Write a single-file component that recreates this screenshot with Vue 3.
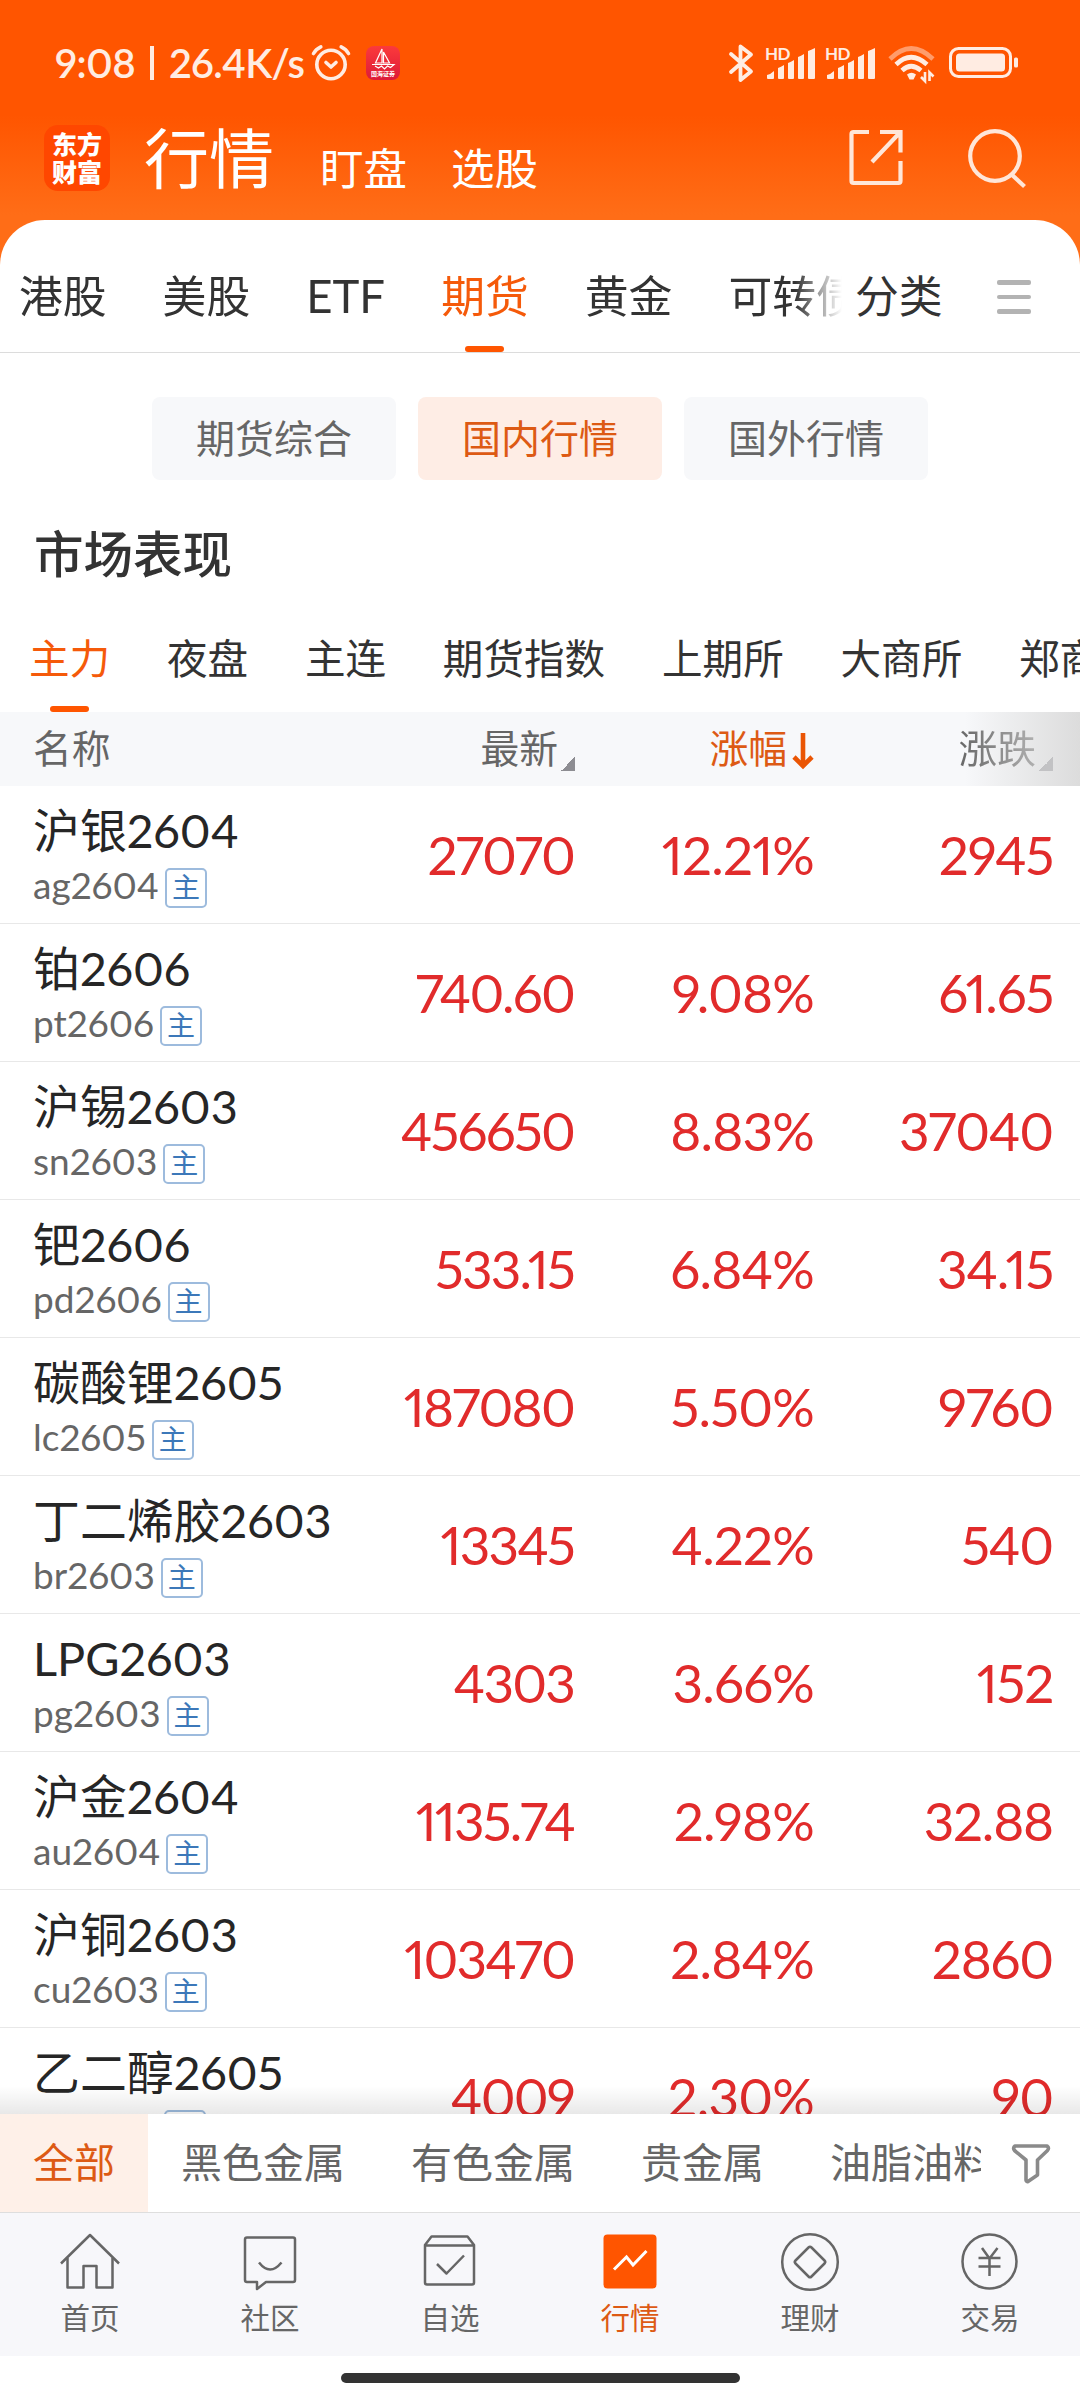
<template>
  <div class="phone">
    <header class="top">
      <!-- Status bar -->
      <div class="status">
        <span class="clock">9:08</span>
        <i class="clock-sep"></i>
        <span class="speed">26.4K/s</span>
        <svg class="alarm" width="40" height="38" viewBox="0 0 40 38" fill="none" stroke="#ffece2" stroke-width="3.6" stroke-linecap="round" stroke-linejoin="round">
          <circle cx="20" cy="20.5" r="14.2" />
          <path d="M15 18.500l5 4.500 5-4.500" />
          <path d="M2.500 9.500Q5 5 9.800 2.800M37.500 9.500Q35 5 30.200 2.800" />
        </svg>
        <div class="mini-app">
          <svg width="24" height="22" viewBox="0 0 24 22" fill="none" stroke="#fff" stroke-width="1.200">
            <path d="M11 1L4.500 15H11zM12.500 4l6 11h-6zM1 16.500h22l-3.500 3-3-1.500-3 3-3-3-3 2-3.500-2" />
          </svg>
          <span>国海证券</span>
        </div>
        <div class="status-right">
          <svg width="24" height="38" viewBox="0 0 24 38" fill="none" stroke="#ffece2" stroke-width="3.8" stroke-linejoin="round" stroke-linecap="round">
            <path d="M2 10l20 17.500-10.500 8.500V2.500L22 10.500 2 28" />
          </svg>
          <svg v-for="n in 2" :key="n" class="signal" width="50" height="34" viewBox="0 0 50 34" fill="#ffece2">
            <text x="-1" y="13.500" font-size="17" font-weight="700" letter-spacing="-0.6">HD</text>
            <path d="M1 32v-3q4-1 7-4v7q0 1-1 1H2q-1 0-1-1zM12 32V22q3-1 6-3v13q0 1-1 1h-4q-1 0-1-1zM22 32V17q3-1 6-3v18q0 1-1 1h-4q-1 0-1-1zM32 32V11q3-1 6-3v24q0 1-1 1h-4q-1 0-1-1zM42 32V5q3-1 7-3v30q0 1-1 1h-5q-1 0-1-1z" />
          </svg>
          <svg class="wifi" width="48" height="38" viewBox="0 0 48 38" fill="none" stroke="#ffece2" stroke-width="4.600">
            <path d="M2 15Q23 -6 45 15" stroke="#ff9c6b" />
            <path d="M8 20.500Q23 6 39 20.500M14 26.500Q23 18 33 26.500" />
            <path d="M19 30.500Q23.500 27 28 30.500L25.500 35.500h-4z" fill="#ffece2" stroke="none" />
            <path d="M37 28v9l-4-4M41.500 37v-8.500l4 4" stroke-width="2.600" />
          </svg>
          <svg width="70" height="32" viewBox="0 0 70 32">
            <rect x="1.500" y="1.500" width="60" height="28" rx="8" fill="none" stroke="#ffece2" stroke-width="3" />
            <rect x="7" y="6.500" width="49" height="18" rx="3.500" fill="#ffece2" />
            <rect x="65" y="10.500" width="4" height="10" rx="1.500" fill="#ffece2" />
          </svg>
        </div>
      </div>

      <!-- App title bar -->
      <div class="titlebar">
        <div class="logo"><span>东方</span><span>财富</span></div>
        <span class="title-main">行情</span>
        <span class="title-sub">盯盘</span>
        <span class="title-sub second">选股</span>
        <div class="title-icons">
          <svg width="54" height="56" viewBox="0 0 54 56" fill="none" stroke="#ffe6d8" stroke-width="4.200" stroke-linejoin="round">
            <path d="M20 3H4.500Q2.500 3 2.500 5v47q0 2 2 2h45q2 0 2-2V32" />
            <path d="M31 3h20.500v20.500M50.500 4L23 33" stroke-linejoin="miter" />
          </svg>
          <svg width="60" height="60" viewBox="0 0 60 60" fill="none" stroke="#ffe6d8" stroke-width="4.200">
            <circle cx="28" cy="27" r="24.800" />
            <path d="M44 45l13.500 12.500" />
          </svg>
        </div>
      </div>
    </header>

    <main class="sheet">
      <nav class="market-tabs">
        <div class="market-scroll">
          <span v-for="tab in marketTabs" :key="tab" :class="{ active: tab === '期货', latin: tab === 'ETF' }">{{ tab }}</span>
        </div>
        <span class="category">分类</span>
        <div class="menu"><i></i><i></i><i></i></div>
      </nav>

      <div class="pills">
        <span v-for="pill in pills" :key="pill" :class="{ active: pill === '国内行情' }">{{ pill }}</span>
      </div>

      <h2>市场表现</h2>

      <nav class="board-tabs">
        <span v-for="tab in boardTabs" :key="tab" :class="{ active: tab === '主力' }">{{ tab }}</span>
      </nav>

      <div class="table-head">
        <span class="col-name">名称</span>
        <span class="col-price">最新<i class="corner"></i></span>
        <span class="col-rate">涨幅<svg width="22" height="38" viewBox="0 0 22 38" fill="none" stroke="#ea5504" stroke-width="4.600"><path d="M11 1v33M2 25l9 9 9-9" /></svg></span>
        <span class="col-diff"><span class="fading">涨跌</span><i class="corner"></i></span>
      </div>

      <div class="list">
        <div v-for="item in contracts" :key="item.code" class="row">
          <div class="col-name">
            <div class="name">{{ item.name }}</div>
            <div class="code">{{ item.code }}<span class="badge">主</span></div>
          </div>
          <span class="col-price">{{ item.price }}</span>
          <span class="col-rate">{{ item.rate }}</span>
          <span class="col-diff">{{ item.diff }}</span>
        </div>
      </div>
    </main>

    <div class="filters">
      <div class="filter-scroll">
        <span v-for="f in filters" :key="f" :class="{ active: f === '全部' }">{{ f }}</span>
      </div>
      <svg width="40" height="40" viewBox="0 0 40 40" fill="none" stroke="#8a8a8a" stroke-width="3.600" stroke-linejoin="round">
        <path d="M4 3h32q2.500 2 .5 4.500L26.500 17v15L17 38.500q-1.500.5-2-1.500V17L3.500 7.500Q1.500 5 4 3z" />
      </svg>
    </div>

    <footer class="tabbar">
      <div v-for="nav in navs" :key="nav.label" class="tab" :class="{ active: nav.icon === 'quote' }">
        <svg width="60" height="60" viewBox="0 0 60 60" fill="none" stroke="#666" stroke-width="2.500" stroke-linejoin="round">
          <template v-if="nav.icon === 'home'">
            <path d="M1 31.500L30 3l29 28.500" />
            <path d="M7.500 26v29.500h16V34h13v21.500h16V26" />
          </template>
          <template v-else-if="nav.icon === 'social'">
            <path d="M7 5.500h46q2 0 2 2V48q0 2-2 2H26l-9 7v-7H7q-2 0-2-2V7.500q0-2 2-2z" />
            <path d="M19 30.500Q30 44.500 41.500 30.500" />
          </template>
          <template v-else-if="nav.icon === 'mine'">
            <path d="M5 13l6.500-8.500h36L54 13v37.500q0 2-2 2H7q-2 0-2-2zM5 13.500h49" />
            <path d="M17 32l9.500 9.500L44 23.500" />
          </template>
          <template v-else-if="nav.icon === 'quote'">
            <rect x="3.500" y="2.500" width="53" height="54" rx="4" fill="#ff5500" stroke="none" />
            <path d="M14 37.500L26.500 25l6.500 8L46.500 19" stroke="#fff" stroke-width="3" stroke-linejoin="miter" />
          </template>
          <template v-else-if="nav.icon === 'wealth'">
            <circle cx="30" cy="30" r="27.800" />
            <path d="M28.500 15.500q1.500-1.500 3 0L44.500 28.500q1.500 1.500 0 3L31.500 44.500q-1.500 1.500-3 0L15.500 31.500q-1.500-1.500 0-3z" />
          </template>
          <template v-else>
            <circle cx="29.500" cy="29.500" r="27" />
            <path d="M22 16l7.500 10.500L37.500 16M29.500 26v18M18.500 26h22M18.500 34.500h22" />
          </template>
        </svg>
        <span>{{ nav.label }}</span>
      </div>
    </footer>
    <div class="gesture"><i></i></div>
  </div>
</template>

<script setup>
import { ref } from 'vue';

const marketTabs = ref(['港股', '美股', 'ETF', '期货', '黄金', '可转债']);
const pills = ref(['期货综合', '国内行情', '国外行情']);
const boardTabs = ref(['主力', '夜盘', '主连', '期货指数', '上期所', '大商所', '郑商所']);
const filters = ref(['全部', '黑色金属', '有色金属', '贵金属', '油脂油料']);

const contracts = ref([
  { name: '沪银2604', code: 'ag2604', price: '27070', rate: '12.21%', diff: '2945' },
  { name: '铂2606', code: 'pt2606', price: '740.60', rate: '9.08%', diff: '61.65' },
  { name: '沪锡2603', code: 'sn2603', price: '456650', rate: '8.83%', diff: '37040' },
  { name: '钯2606', code: 'pd2606', price: '533.15', rate: '6.84%', diff: '34.15' },
  { name: '碳酸锂2605', code: 'lc2605', price: '187080', rate: '5.50%', diff: '9760' },
  { name: '丁二烯胶2603', code: 'br2603', price: '13345', rate: '4.22%', diff: '540' },
  { name: 'LPG2603', code: 'pg2603', price: '4303', rate: '3.66%', diff: '152' },
  { name: '沪金2604', code: 'au2604', price: '1135.74', rate: '2.98%', diff: '32.88' },
  { name: '沪铜2603', code: 'cu2603', price: '103470', rate: '2.84%', diff: '2860' },
  { name: '乙二醇2605', code: 'eg2605', price: '4009', rate: '2.30%', diff: '90' },
]);

const navs = ref([
  { icon: 'home', label: '首页' },
  { icon: 'social', label: '社区' },
  { icon: 'mine', label: '自选' },
  { icon: 'quote', label: '行情' },
  { icon: 'wealth', label: '理财' },
  { icon: 'trade', label: '交易' },
]);
</script>

<style>
body {
  background: #fff;
}
</style>

<style scoped>
.phone {
  width: 1080px;
  height: 2400px;
  display: flex;
  flex-direction: column;
  overflow: hidden;
  font-family: Lato, "Noto Sans CJK SC", sans-serif;
  font-variant-numeric: proportional-nums;
  color: #333;
  white-space: nowrap;
  background: #fff;
}

.phone svg {
  display: block;
  flex-shrink: 0;
  overflow: visible;
}

.top {
  height: 270px;
  margin-bottom: -50px;
  flex-shrink: 0;
  background: linear-gradient(#ff5500 115px, #ff6d17 215px);
}

.status {
  display: flex;
  align-items: center;
  height: 126px;
  padding-left: 55px;
  color: #ffece2;
  font-size: 40px;
  font-weight: 600;
}

.clock {
  width: 82px;
  letter-spacing: -0.5px;
}

.clock-sep {
  width: 4px;
  height: 34px;
  margin: 0 15px 0 13px;
  background: #ffece2;
}

.speed {
  width: 139px;
  letter-spacing: -0.7px;
}

.alarm {
  margin-left: 3px;
}

.mini-app {
  width: 34px;
  height: 34px;
  margin-left: 15px;
  border-radius: 8px;
  background: linear-gradient(#fb3a3c, #dd1a38);
  display: flex;
  flex-direction: column;
  align-items: center;
  padding-top: 2px;
  box-sizing: border-box;
}

.mini-app span {
  font-size: 6px;
  line-height: 8px;
  color: #fff;
}

.status-right {
  display: flex;
  align-items: center;
  margin-left: auto;
  padding-right: 61px;
}

.signal {
  margin-left: 10px;
}

.signal:nth-child(2) {
  margin-left: 13px;
}

.wifi {
  margin-left: 12px;
  margin-right: 13px;
}

.titlebar {
  display: flex;
  height: 94px;
  padding-left: 44px;
  color: #fff;
}

.logo {
  width: 66px;
  height: 66px;
  margin-top: -1px;
  border-radius: 14px;
  background: #ff4700;
  display: flex;
  flex-direction: column;
  align-items: center;
  justify-content: center;
  font-size: 25px;
  line-height: 28px;
  font-weight: 900;
}

.title-main {
  margin-left: 34px;
  font-size: 65px;
  line-height: 64px;
}

.title-sub {
  margin-left: 46px;
  font-size: 43.5px;
  line-height: 84px;
}

.title-sub.second {
  margin-left: 44px;
}

.title-icons {
  display: flex;
  gap: 64px;
  margin-left: auto;
  margin-top: 3px;
  padding-right: 53px;
}

.sheet {
  flex: 1;
  min-height: 0;
  display: flex;
  flex-direction: column;
  border-radius: 45px 45px 0 0;
  background: #fff;
  overflow: hidden;
}

.market-tabs {
  display: flex;
  height: 132px;
  flex-shrink: 0;
  border-bottom: 1px solid #dcdcdc;
  font-size: 43.8px;
  line-height: 152px;
}

.market-scroll {
  display: flex;
  gap: 56px;
  width: 823px;
  padding-left: 19px;
  overflow: hidden;
  -webkit-mask-image: linear-gradient(90deg, #000 795px, rgba(0, 0, 0, 0.35) 825px, transparent 842px);
  mask-image: linear-gradient(90deg, #000 795px, rgba(0, 0, 0, 0.35) 825px, transparent 842px);
}

.market-scroll span {
  position: relative;
  flex-shrink: 0;
}

.market-scroll .latin {
  width: 79px;
  font-size: 45.5px;
}

.market-scroll .active,
.board-tabs .active {
  color: #f55a0a;
}

.market-scroll .active::after,
.board-tabs .active::after {
  content: "";
  position: absolute;
  left: 50%;
  bottom: 0;
  width: 39px;
  height: 6px;
  margin-left: -19.5px;
  border-radius: 3px;
  background: #ff5500;
}

.category {
  margin-left: 13px;
}

.menu {
  display: flex;
  flex-direction: column;
  gap: 10px;
  margin: 60px 0 0 54px;
}

.menu i {
  width: 34px;
  height: 4.500px;
  border-radius: 2px;
  background: #b3b3b3;
}

.pills {
  display: flex;
  justify-content: center;
  gap: 22px;
  margin-top: 44px;
}

.pills span {
  width: 244px;
  height: 83px;
  border-radius: 8px;
  background: #f7f8fa;
  color: #666;
  font-size: 39px;
  line-height: 82px;
  text-align: center;
}

.pills .active {
  background: #feede5;
  color: #dd5a14;
}

h2 {
  margin: 39px 0 0 34px;
  font-size: 49.500px;
  line-height: 70px;
  font-weight: 500;
}

.board-tabs {
  display: flex;
  gap: 56.800px;
  height: 106px;
  margin-top: 17px;
  padding-left: 29px;
  font-size: 40.600px;
  line-height: 106px;
}

.board-tabs span {
  position: relative;
  flex-shrink: 0;
}

.table-head {
  display: flex;
  height: 74px;
  flex-shrink: 0;
  background: linear-gradient(90deg, transparent 965px, #dcdcdc 1080px), #f7f8fa;
  color: #666;
  font-size: 38.800px;
  line-height: 72px;
}

.table-head .col-price,
.table-head .col-rate,
.table-head .col-diff {
  display: flex;
  justify-content: flex-end;
}

.table-head .col-rate {
  color: #dd5a14;
}

.table-head .col-rate svg {
  margin: 20px 0 0 5px;
}

.fading {
  background: linear-gradient(90deg, #666, #b0b0b0);
  -webkit-background-clip: text;
  background-clip: text;
  color: transparent;
}

.corner {
  width: 14px;
  height: 14px;
  margin: 45px 0 0 3px;
  background: linear-gradient(135deg, transparent 50%, #8d8d92 50%);
}

.col-diff .corner {
  background: linear-gradient(135deg, transparent 50%, #c2c2c4 50%);
}

.col-name {
  width: 331px;
  padding-left: 33px;
}

.col-price {
  width: 211px;
  text-align: right;
}

.col-rate {
  width: 239px;
  text-align: right;
}

.col-diff {
  width: 239px;
  text-align: right;
}

.list {
  flex: 1;
  min-height: 0;
  overflow: hidden;
}

.row {
  display: flex;
  height: 138px;
  box-sizing: border-box;
  border-bottom: 1px solid #e8e8e8;
  color: #e12b2b;
  font-size: 53px;
  line-height: 137px;
}

.row .col-price {
  width: 210px;
  letter-spacing: -1.800px;
}

.row .col-rate {
  width: 240px;
  letter-spacing: -0.800px;
}

.row .col-diff {
  letter-spacing: -1.200px;
}

.row .name {
  height: 76px;
  color: #262626;
  font-size: 46.900px;
  line-height: 89px;
}

.row .code {
  display: flex;
  color: #666;
  font-size: 37px;
  line-height: 46px;
}

.badge {
  width: 42px;
  height: 40px;
  margin: 6px 0 0 6px;
  box-sizing: border-box;
  border: 2px solid #9dbbdd;
  border-radius: 5px;
  color: #3c78b9;
  font-size: 28px;
  line-height: 34px;
  text-align: center;
}

.filters {
  position: relative;
  display: flex;
  align-items: center;
  height: 99px;
  flex-shrink: 0;
  box-sizing: border-box;
  border-bottom: 1px solid #dedede;
  background: #fff;
}

/* soft fade over the last visible row */
.filters::before {
  content: "";
  position: absolute;
  left: 0;
  right: 0;
  bottom: 100%;
  height: 28px;
  background: linear-gradient(rgba(0, 0, 0, 0), rgba(0, 0, 0, 0.09));
}

.filter-scroll {
  display: flex;
  width: 981px;
  margin-right: 30px;
  overflow: hidden;
}

.filter-scroll span {
  flex-shrink: 0;
  padding: 0 33px;
  height: 98px;
  color: #666;
  font-size: 41px;
  line-height: 98px;
}

.filter-scroll .active {
  background: #fef0e8;
  color: #dd5a14;
}

.tabbar {
  display: flex;
  height: 143px;
  flex-shrink: 0;
  background: #f7f7fa;
}

.tab {
  display: flex;
  flex-direction: column;
  align-items: center;
  width: 180px;
  padding-top: 19px;
  color: #666;
  font-size: 29.500px;
  line-height: 52px;
}

.tab.active {
  color: #dd5a14;
}

.gesture {
  display: flex;
  justify-content: center;
  height: 44px;
  flex-shrink: 0;
}

.gesture i {
  width: 399px;
  height: 10px;
  margin-top: 17px;
  border-radius: 5px;
  background: #333;
}
</style>
